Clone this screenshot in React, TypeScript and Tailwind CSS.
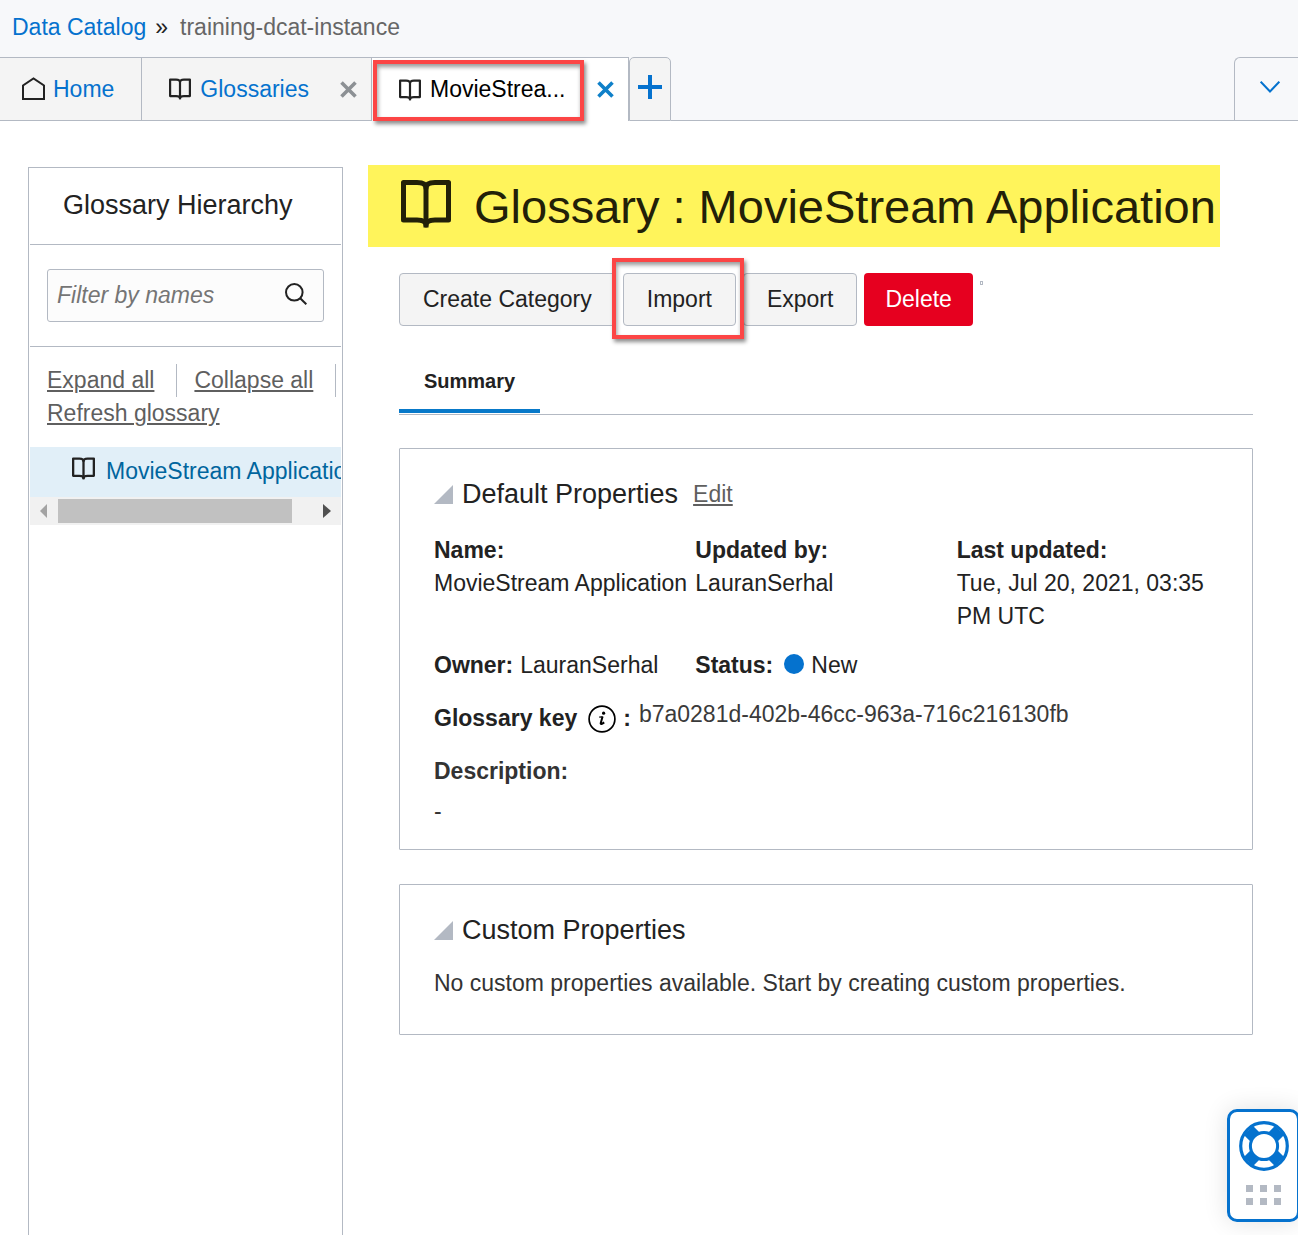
import React from "react";

const BORDER = "border-[#b3b9c3]";

function BookIcon({ className }: { className: string }) {
  return (
    <svg viewBox="0 0 50 48" className={className} fill="none" stroke="currentColor" strokeWidth="5" strokeLinejoin="round" aria-hidden="true">
      <path d="M2.5 2.5H16Q25 2.5 25 8Q25 2.5 34 2.5H47.5V40H34Q25 40 25 45Q25 40 16 40H2.5Z" />
      <path d="M25 7V47.5" />
    </svg>
  );
}

function HomeIcon() {
  return (
    <svg viewBox="0 0 24 24" className="h-6 w-6 shrink-0 text-[#222]" fill="none" stroke="currentColor" strokeWidth="2" aria-hidden="true">
      <path d="M2 22V8.5L12.5 1.5L23 8.5V22Z" />
    </svg>
  );
}

function CloseIcon() {
  return (
    <svg viewBox="0 0 17 17" className="h-[17px] w-[17px]" fill="none" stroke="currentColor" strokeWidth="3.6" aria-hidden="true">
      <path d="M1.5 1.5L15.5 15.5M15.5 1.5L1.5 15.5" />
    </svg>
  );
}

function Triangle() {
  return (
    <svg viewBox="0 0 19 19" className="h-[19px] w-[19px] shrink-0" aria-hidden="true">
      <path d="M19 0V19H0Z" fill="#b3b9c3" />
    </svg>
  );
}

function LifeRing() {
  return (
    <svg viewBox="0 0 50 50" className="h-[50px] w-[50px]" fill="none" stroke="#0572ce" aria-hidden="true">
      <path strokeWidth="13" d="M9.5 9.5L40.5 40.5M40.5 9.5L9.5 40.5" />
      <circle cx="25" cy="25" r="23.3" strokeWidth="3.2" />
      <circle cx="25" cy="25" r="13.6" strokeWidth="3" fill="#fff" />
    </svg>
  );
}

function RedOutline({ className }: { className: string }) {
  return (
    <span
      className={`pointer-events-none absolute z-10 border-4 border-[#fc4545] shadow-[2px_3px_4px_rgba(0,0,0,0.45),inset_1px_3px_4px_rgba(0,0,0,0.4)] ${className}`}
    />
  );
}

const actionButton = `h-[53px] rounded-[4px] border ${BORDER} bg-[#f4f4f4] px-[23px] pb-px text-[#222]`;
const textLink = "text-[#5f5f5f] underline decoration-2 underline-offset-2";

export default function App() {
  return (
    <div className="flex min-h-screen flex-col bg-white font-['Liberation_Sans',Arial,sans-serif] text-[23px] leading-[33px] text-[#222]">
      <header className="bg-[#f7f8fa]">
        <nav aria-label="Breadcrumb" className="flex h-[57px] items-center pb-[2px] pl-3">
          <a href="#catalog" className="text-[#0572ce]">Data Catalog</a>
          <span className="ml-[9px] mr-3 text-[#222]">»</span>
          <span className="text-[#666]">training-dcat-instance</span>
        </nav>
        <div className="flex h-16">
          <div className={`flex items-center gap-2 border-y border-r ${BORDER} bg-[#f4f4f4] pl-[21px] pr-[27px]`}>
            <HomeIcon />
            <a href="#home" className="text-[#0572ce]">Home</a>
          </div>
          <div className={`flex items-center border-y border-r ${BORDER} bg-[#f4f4f4] pl-[27px] pr-[14px]`}>
            <BookIcon className="h-[22px] w-[22px] shrink-0" />
            <a href="#glossaries" className="ml-[9px] text-[#0572ce]">Glossaries</a>
            <button aria-label="Close Glossaries" className="ml-[31px] text-[#8c9094]"><CloseIcon /></button>
          </div>
          <div className={`flex items-center border-r border-t ${BORDER} bg-white pl-[27px] pr-[14px]`}>
            <span className="relative flex items-center">
              <BookIcon className="h-[22px] w-[22px] shrink-0" />
              <a href="#moviestream" className="ml-[9px] text-black">MovieStrea...</a>
              <RedOutline className="-bottom-[15px] -left-[26px] -right-[18px] -top-[13px]" />
            </span>
            <button aria-label="Close MovieStream Application" className="ml-[31px] text-[#0f80c9]"><CloseIcon /></button>
          </div>
          <button aria-label="New tab" className={`flex w-[42px] items-center justify-center rounded-t-[5px] border ${BORDER} bg-[#f4f4f4] pb-1`}>
            <svg viewBox="0 0 24 24" className="h-6 w-6" stroke="#0572ce" strokeWidth="4" aria-hidden="true"><path d="M12 0V24M0 12H24" /></svg>
          </button>
          <div className={`flex-1 border-b ${BORDER}`} />
          <button aria-label="Show all tabs" className={`flex w-16 items-center rounded-tl-[6px] border-y border-l ${BORDER} pb-1 pl-[25px]`}>
            <svg viewBox="0 0 20 12" className="h-3 w-5" fill="none" stroke="#0572ce" strokeWidth="2" aria-hidden="true"><path d="M0.7 0.7L10 10.5L19.3 0.7" /></svg>
          </button>
        </div>
      </header>

      <div className="flex flex-1">
        <aside className={`ml-7 mt-[46px] w-[315px] shrink-0 border-x border-t px-px ${BORDER}`}>
          <h2 className={`border-b ${BORDER} pb-[22px] pl-[33px] pt-[21px] text-[27px]`}>Glossary Hierarchy</h2>
          <div className={`border-b ${BORDER} px-[17px] py-6`}>
            <div className={`flex h-[53px] items-center rounded-[3px] border ${BORDER} bg-[#fcfcfc] pl-[9px] pr-4`}>
              <input type="text" aria-label="Filter by names" placeholder="Filter by names" className="h-[33px] min-w-0 flex-1 bg-transparent italic outline-none placeholder:text-[#757575]" />
              <svg viewBox="0 0 22 22" className="mb-1 h-[22px] w-[22px]" fill="none" stroke="#222" strokeWidth="2" aria-hidden="true">
                <circle cx="9.3" cy="9.3" r="8.3" />
                <path d="M15.2 15.2L21.3 21.3" />
              </svg>
            </div>
          </div>
          <div className="flex flex-wrap pb-[17px] pl-[17px] pt-[17px]">
            <a href="#expand" className={`mr-[17px] border-r ${BORDER} pr-[22px] ${textLink}`}>Expand all</a>
            <a href="#collapse" className={`border-r ${BORDER} pr-[22px] ${textLink}`}>Collapse all</a>
            <a href="#refresh" className={textLink}>Refresh glossary</a>
          </div>
          <div className="flex h-[50px] items-center overflow-hidden bg-[#e1eff8] pb-[2px] pl-[42px]">
            <BookIcon className="mb-1.5 h-[23px] w-[23px] shrink-0" />
            <a href="#tree-item" className="ml-[11px] whitespace-nowrap text-[#00659e]">MovieStream Application</a>
          </div>
          <div className="flex h-7 items-center bg-[#f1f1f1]">
            <button aria-label="Scroll left" className="flex h-7 w-7 items-center pl-[10px]">
              <svg viewBox="0 0 7 14" className="h-[14px] w-[7px]" aria-hidden="true"><path d="M7 0V14L0 7Z" fill="#a3a3a3" /></svg>
            </button>
            <div className="flex-1">
              <div className="h-6 w-11/12 bg-[#c1c1c1]" />
            </div>
            <button aria-label="Scroll right" className="flex h-7 w-7 items-center pl-[10px]">
              <svg viewBox="0 0 8 14" className="h-[14px] w-[8px]" aria-hidden="true"><path d="M0 0V14L8 7Z" fill="#505050" /></svg>
            </button>
          </div>
        </aside>

        <main className="ml-14 mr-[45px] mt-11 min-w-0 flex-1">
          <h1 className="-ml-[31px] flex h-[82px] w-fit items-center bg-[#fff45b] pl-[33px] pr-1 text-[47px] text-[#222008]">
            <BookIcon className="mb-1 h-12 w-[50px] shrink-0" />
            <span className="ml-[23px] whitespace-nowrap">Glossary : MovieStream Application</span>
          </h1>

          <div className="mt-[26px] flex gap-[7px]">
            <button className={actionButton}>Create Category</button>
            <div className="relative">
              <button className={actionButton}>Import</button>
              <RedOutline className="-bottom-[13px] -left-[11px] -right-2 -top-[15px]" />
            </div>
            <button className={actionButton}>Export</button>
            <button className="h-[53px] rounded-[4px] bg-[#e6001f] px-[21px] pb-px text-white">Delete</button>
            <span className={`mt-2 h-1 w-[3px] border ${BORDER}`} />
          </div>

          <div role="tablist" className={`mt-[23px] flex border-b ${BORDER} pb-px`}>
            <button role="tab" aria-selected="true" className="h-16 border-b-4 border-[#0879c9] px-[25px] pt-[5px] text-[20px] font-bold">Summary</button>
          </div>

          <section className={`mt-[33px] rounded-[1px] border ${BORDER} px-[34px] pb-[21px] pt-[29px]`}>
            <div className="flex items-center">
              <Triangle />
              <h2 className="ml-[9px] text-[27px]">Default Properties</h2>
              <a href="#edit" className={`ml-[15px] ${textLink}`}>Edit</a>
            </div>
            <dl className="mt-[23px] grid grid-cols-3 gap-y-4">
              <div>
                <dt className="font-bold">Name:</dt>
                <dd className="whitespace-nowrap">MovieStream Application</dd>
              </div>
              <div>
                <dt className="font-bold">Updated by:</dt>
                <dd>LauranSerhal</dd>
              </div>
              <div>
                <dt className="font-bold">Last updated:</dt>
                <dd>Tue, Jul 20, 2021, 03:35 PM UTC</dd>
              </div>
              <div className="flex gap-[7px]">
                <dt className="font-bold">Owner:</dt>
                <dd>LauranSerhal</dd>
              </div>
              <div className="flex">
                <dt className="font-bold">Status:</dt>
                <dd className="ml-[11px] flex items-center gap-[7px]">
                  <span className="mb-1 h-5 w-5 rounded-full bg-[#0572ce]" />
                  New
                </dd>
              </div>
              <div className="col-span-3 flex">
                <dt className="mt-1 flex items-center font-bold">
                  Glossary key
                  <svg viewBox="0 0 28 28" className="ml-[11px] mr-[7px] h-7 w-7" role="img" aria-label="Information">
                    <circle cx="14" cy="14" r="12.9" fill="none" stroke="#000" strokeWidth="1.7" />
                    <circle cx="15.6" cy="8.2" r="1.6" />
                    <path d="M11.2 12.2L14.6 11.8" fill="none" stroke="#000" strokeWidth="1.3" />
                    <path d="M14.6 11.4L12.7 18.2Q12.4 20.2 16.2 17.4" fill="none" stroke="#000" strokeWidth="2" />
                  </svg>
                  :
                </dt>
                <dd className="ml-2 text-[#3a3a3a]">b7a0281d-402b-46cc-963a-716c216130fb</dd>
              </div>
              <div className="col-span-3 mt-1 text-[#333]">
                <dt className="font-bold">Description:</dt>
                <dd className="mt-[7px]">-</dd>
              </div>
            </dl>
          </section>

          <section className={`mt-[34px] rounded-[1px] border ${BORDER} px-[34px] pb-[34px] pt-[29px]`}>
            <div className="flex items-center">
              <Triangle />
              <h2 className="ml-[9px] text-[27px]">Custom Properties</h2>
            </div>
            <p className="mt-5 text-[#333]">No custom properties available. Start by creating custom properties.</p>
          </section>
        </main>
      </div>

      <button aria-label="Help" className="fixed -right-0.5 bottom-[13px] flex h-[113px] w-[73px] flex-col items-center gap-[14px] rounded-[10px] border-3 border-[#0572ce] bg-white pt-[9px] shadow-[0_0_24px_rgba(0,0,0,0.12)]">
        <LifeRing />
        <span className="grid grid-cols-3 gap-x-[7px] gap-y-[6px]">
          {[0, 1, 2, 3, 4, 5].map((i) => (
            <span key={i} className="h-[7px] w-[7px] bg-[#b3b9c3]" />
          ))}
        </span>
      </button>
    </div>
  );
}
